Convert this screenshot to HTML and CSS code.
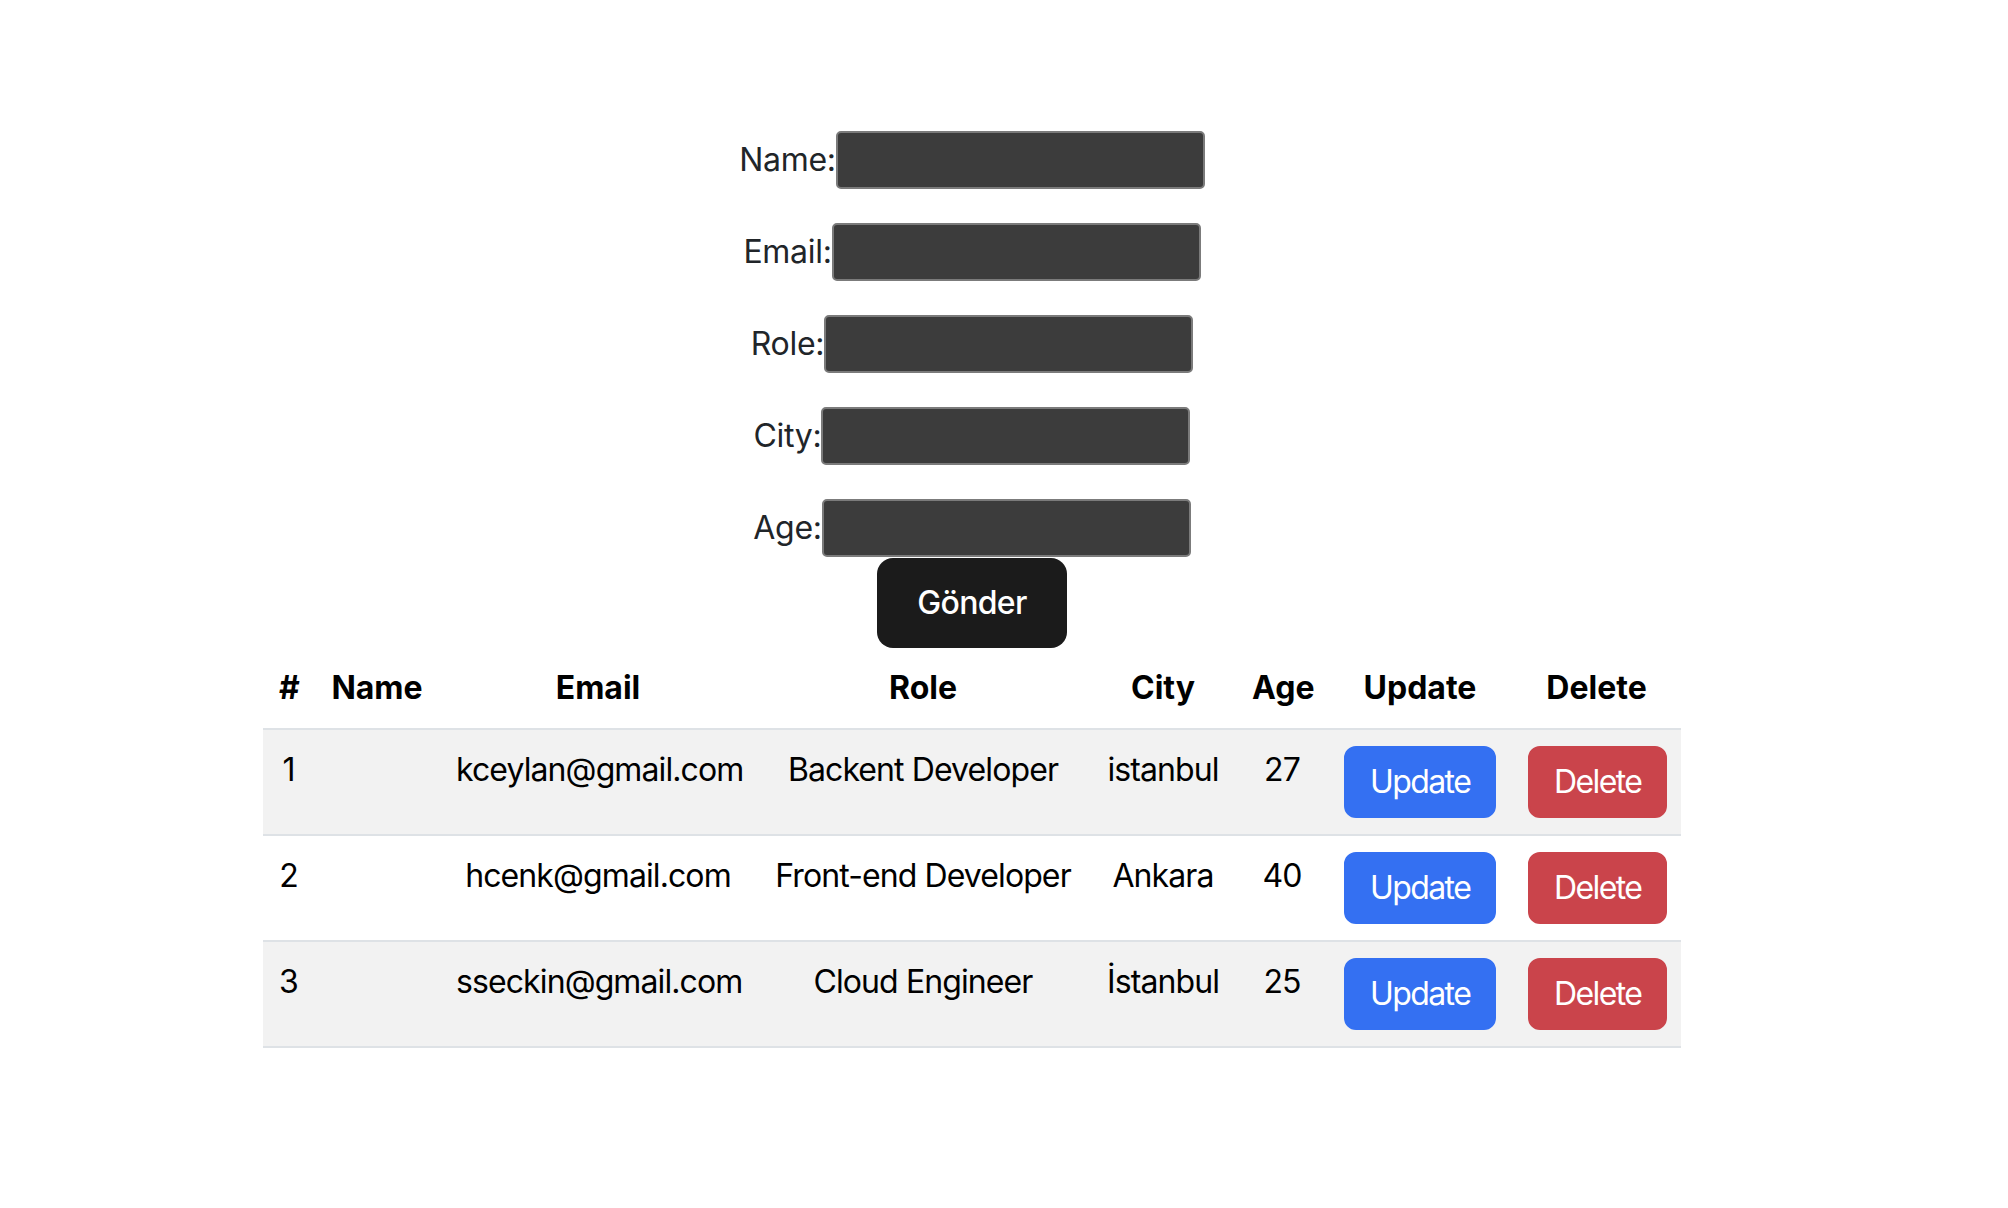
FILE: index.html
```html
<!DOCTYPE html>
<html lang="tr">
<head>
<meta charset="utf-8">
<title>Users</title>
<link rel="stylesheet" href="styles.css">
</head>
<body>
<div class="app">
  <form class="user-form">
    <div class="field"><label>Name:</label><input class="text-input" type="text"></div>
    <div class="field"><label>Email:</label><input class="text-input" type="text"></div>
    <div class="field"><label>Role:</label><input class="text-input" type="text"></div>
    <div class="field"><label>City:</label><input class="text-input" type="text"></div>
    <div class="field"><label>Age:</label><input class="text-input" type="text"></div>
    <button type="button" class="submit-btn">Gönder</button>
  </form>
  <table class="user-table">
    <colgroup>
      <col class="c-id"><col class="c-name"><col class="c-email"><col class="c-role">
      <col class="c-city"><col class="c-age"><col class="c-upd"><col class="c-del">
    </colgroup>
    <thead>
      <tr><th>#</th><th>Name</th><th>Email</th><th>Role</th><th>City</th><th>Age</th><th>Update</th><th>Delete</th></tr>
    </thead>
    <tbody>
      <tr class="striped"><td>1</td><td></td><td>kceylan@gmail.com</td><td>Backent Developer</td><td>istanbul</td><td>27</td><td><button class="btn btn-update">Update</button></td><td><button class="btn btn-delete">Delete</button></td></tr>
      <tr><td>2</td><td></td><td>hcenk@gmail.com</td><td>Front-end Developer</td><td>Ankara</td><td>40</td><td><button class="btn btn-update">Update</button></td><td><button class="btn btn-delete">Delete</button></td></tr>
      <tr class="striped"><td>3</td><td></td><td>sseckin@gmail.com</td><td>Cloud Engineer</td><td>İstanbul</td><td>25</td><td><button class="btn btn-update">Update</button></td><td><button class="btn btn-delete">Delete</button></td></tr>
    </tbody>
  </table>
</div>
</body>
</html>
```
FILE: styles.css
```css
html, body {
  margin: 0;
  padding: 0;
  background: #ffffff;
}
body {
  font-family: Inter, "Noto Sans", "Liberation Sans", sans-serif;
  font-size: 32px;
  line-height: 48px;
  color: #212529;
}
.app {
  width: 1944px;
  padding-top: 131px;
  box-sizing: border-box;
}
.user-form {
  display: flex;
  flex-direction: column;
  align-items: center;
  margin: 0;
}
.field {
  display: flex;
  align-items: center;
  justify-content: center;
  height: 58px;
  margin-bottom: 34px;
}
.field:last-of-type {
  margin-bottom: 0;
}
.field label {
  font-size: 32px;
  line-height: 48px;
  color: #212529;
  letter-spacing: -0.3px;
}
.text-input {
  width: 369px;
  height: 58px;
  box-sizing: border-box;
  margin: 0;
  background: #3c3c3c;
  border: 2px solid #7b7b7b;
  border-radius: 5px;
  color: #ffffff;
  font: inherit;
  padding: 0 4px;
}
.submit-btn {
  margin: 1px 0 0;
  height: 90px;
  box-sizing: border-box;
  padding: 19px 38px;
  border: 2px solid transparent;
  border-radius: 16px;
  background: #1b1b1b;
  color: #ffffff;
  font-family: inherit;
  font-size: 32px;
  font-weight: 500;
  line-height: 48px;
  letter-spacing: -0.7px;
}
.user-table {
  margin: 0 auto;
  width: 1418px;
  table-layout: fixed;
  border-collapse: collapse;
  color: #000000;
  vertical-align: top;
}
.c-id { width: 51px; }
.c-name { width: 126px; }
.c-email { width: 316px; }
.c-role { width: 334px; }
.c-city { width: 146px; }
.c-age { width: 92px; }
.c-upd { width: 184px; }
.c-del { width: 169px; }
.user-table th,
.user-table td {
  padding: 16px;
  text-align: center;
  vertical-align: top;
  border-bottom: 2px solid #dee2e6;
  white-space: nowrap;
  overflow: visible;
}
.user-table td {
  letter-spacing: -0.9px;
}
.user-table th {
  font-weight: 700;
  height: 48px;
}
.user-table tbody tr.striped td {
  background: #f2f2f2;
}
.btn {
  display: inline-block;
  height: 72px;
  box-sizing: border-box;
  padding: 10px 24px;
  border: 2px solid transparent;
  border-radius: 12px;
  font-family: inherit;
  font-size: 32px;
  font-weight: 400;
  line-height: 48px;
  color: #ffffff;
  vertical-align: top;
  letter-spacing: -1.6px;
}
.btn-update {
  background: #3470f2;
  border-color: #3470f2;
}
.btn-delete {
  background: #ca444b;
  border-color: #ca444b;
}
```
